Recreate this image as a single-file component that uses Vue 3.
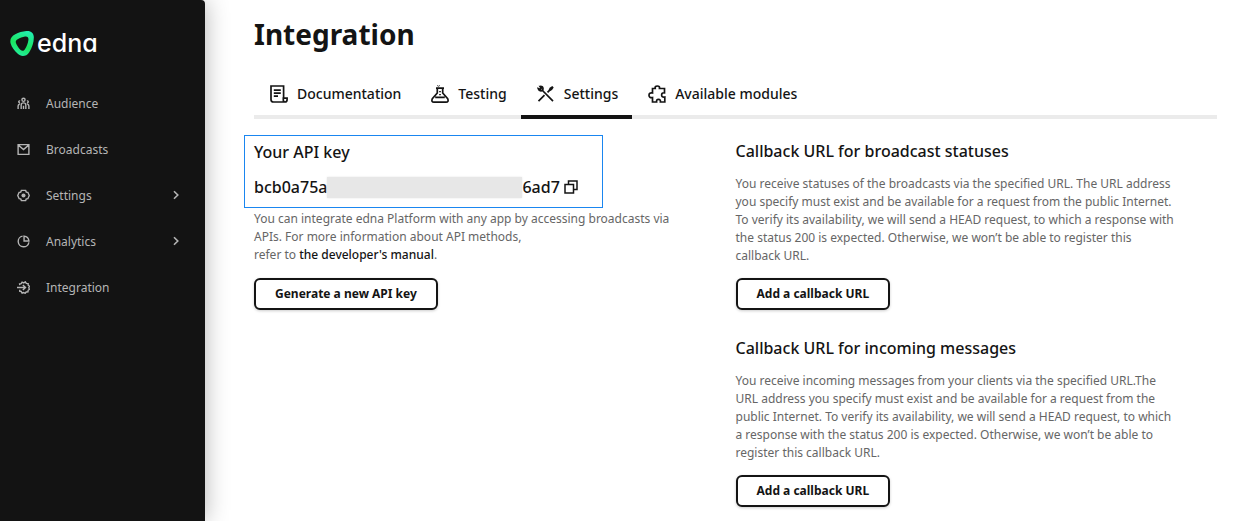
<script setup>
import { ref } from 'vue'

const menu = [
  { id: 'audience', label: 'Audience' },
  { id: 'broadcasts', label: 'Broadcasts' },
  { id: 'settings', label: 'Settings', nested: true },
  { id: 'analytics', label: 'Analytics', nested: true },
  { id: 'integration', label: 'Integration' },
]

const tabs = [
  { id: 'docs', label: 'Documentation' },
  { id: 'testing', label: 'Testing' },
  { id: 'settings', label: 'Settings' },
  { id: 'modules', label: 'Available modules' },
]
const activeTab = ref('settings')

const callbacks = [
  {
    id: 'statuses',
    title: 'Callback URL for broadcast statuses',
    text: 'You receive statuses of the broadcasts via the specified URL. The URL address you specify must exist and be available for a request from the public Internet. To verify its availability, we will send a HEAD request, to which a response with the status 200 is expected. Otherwise, we won’t be able to register this callback URL.',
  },
  {
    id: 'incoming',
    title: 'Callback URL for incoming messages',
    text: 'You receive incoming messages from your clients via the specified URL.The URL address you specify must exist and be available for a request from the public Internet. To verify its availability, we will send a HEAD request, to which a response with the status 200 is expected. Otherwise, we won’t be able to register this callback URL.',
  },
]
</script>

<template>
  <div class="layout">
    <aside class="sidebar">
      <a class="logo" href="#">
        <svg class="logo-mark" viewBox="0 0 26 28" aria-hidden="true">
          <defs>
            <linearGradient id="mark" x1="0.8" y1="0" x2="0.4" y2="1">
              <stop offset="0" stop-color="#22efb4" />
              <stop offset="0.6" stop-color="#1be560" />
              <stop offset="1" stop-color="#22eda0" />
            </linearGradient>
          </defs>
          <path
            fill="url(#mark)"
            fill-rule="evenodd"
            d="M17 1C21.500 0.500 24.800 3 24.800 7.500C24.800 13 23 18.500 20 23C17 27.800 11.500 28.300 7.800 24.500C4.500 21.300 1.800 18 0.600 13.800C-0.400 9.500 1.500 6.300 5.500 4.300C9 2.500 13 1.400 17 1ZM15.600 6.700C12.800 7.200 10.500 8.200 8 9.500C5.800 10.700 5.500 12.300 6.600 14.500C7.700 16.800 9 18.700 10.800 20.500C12.500 22.200 14.200 22 15.500 20C17.300 17.200 18.600 13.800 19.100 10.500C19.500 7.700 18.400 6.300 15.600 6.700Z"
          />
        </svg>
        <span class="logo-text">edna</span>
      </a>

      <nav class="menu" aria-label="Main">
        <a v-for="item in menu" :key="item.id" class="menu-item" href="#">
          <svg class="menu-icon" viewBox="0 0 14 14" aria-hidden="true">
            <template v-if="item.id === 'audience'">
              <circle cx="7" cy="3" r="1.700" />
              <path d="M4.500 13V8.500Q4.500 6.300 7 6.300Q9.500 6.300 9.500 8.500V13M7 9.500V13M3.300 4.300a1 1 0 1 0 0 1.800M10.700 4.300a1 1 0 1 1 0 1.800M1.200 13V9.700Q1.200 8 3 7.800M12.800 13V9.700Q12.800 8 11 7.800" />
            </template>
            <template v-else-if="item.id === 'broadcasts'">
              <path d="M1.200 1.700H12.800V12.300H1.200ZM1.500 2.300L7 7L12.500 2.300" />
            </template>
            <template v-else-if="item.id === 'settings'">
              <path d="M4.700 1.500H9.300L10 3.300L11.700 3.600L13.200 7L11.700 10.400L10 10.700L9.300 12.500H4.700L4 10.700L2.300 10.400L0.800 7L2.300 3.600L4 3.300Z" />
              <circle class="solid" cx="7" cy="7" r="2.200" />
            </template>
            <template v-else-if="item.id === 'analytics'">
              <path d="M6 1.200A5.800 5.800 0 1 0 12.800 7.900M7.600 1.200V6.400H12.800A5.800 5.800 0 0 0 7.600 1.200Z" />
            </template>
            <template v-else>
              <path d="M3 4.500L2.800 3L4.500 2.900L5.500 1.300L7.200 2L9 0.900L10 2.500L12 2.700L12 4.600L13.400 5.700L12.700 7.300L13.400 9L12 10L11.800 11.800L9.900 11.900L8.800 13.200L7.200 12.400L5.500 13L4.500 11.300L2.900 11L3 9.500" />
              <path d="M0 7H9M6.300 4.200L9.200 7L6.300 9.800" />
            </template>
          </svg>
          <span class="menu-label">{{ item.label }}</span>
          <svg v-if="item.nested" class="chevron" viewBox="0 0 8 10" aria-hidden="true">
            <path d="M2 1.200L5.800 5L2 8.800" />
          </svg>
        </a>
      </nav>
    </aside>

    <main class="content">
      <h1 class="title">Integration</h1>

      <div class="tabs" role="tablist">
        <button
          v-for="tab in tabs"
          :key="tab.id"
          type="button"
          role="tab"
          class="tab"
          :class="{ active: tab.id === activeTab }"
          :aria-selected="tab.id === activeTab"
          @click="activeTab = tab.id"
        >
          <svg class="tab-icon" viewBox="0 0 18 18" aria-hidden="true">
            <template v-if="tab.id === 'docs'">
              <path d="M13.600 12.500V1H1V14.500Q1 17 3.500 17H15Q17.100 17 17.100 14.500V13.200H13.300V15Q13.300 17 15 17M3.800 5.200H10.800M3.800 8.200H10.800M3.800 11.200H8" />
            </template>
            <template v-else-if="tab.id === 'testing'">
              <path d="M5 3.200H13M6.300 3.500V8L1.300 13.800Q0 17.100 3 17.100H15Q18 17.100 16.700 13.800L11.700 8V3.500M4.200 12.300H13.800M9 6V7.200M9 9V10.200" />
              <circle cx="7.500" cy="0.600" r="0.300" />
            </template>
            <template v-else-if="tab.id === 'settings'">
              <path d="M1.500 16.200L7.500 10.200M10.500 7.300L13 4.800M5 5L16 16.200" />
              <path class="solid" d="M11.600 5L12.600 2.800L15.300 1.100L16.700 2.500L15 5.100L12.800 6.200Z" />
              <path d="M3 1.500Q5.800 1.100 6 3.500Q6 5.600 4.200 5.800Q2 6 1.300 3.700L3.300 4.400L4.200 3.300Z" />
            </template>
            <template v-else>
              <path d="M4.500 3.500H7.200Q6.700 1 9.300 1Q12 1 11.500 3.500H16.500V7.800Q13.600 7.500 13.600 10Q13.600 12.500 16.800 12V17H12.400Q12.700 14.300 10.500 14.300Q8.200 14.300 8.600 17H4.500V12.500Q1 13 1 10.200Q1 7.500 4.500 8Z" />
            </template>
          </svg>
          {{ tab.label }}
        </button>
      </div>

      <div class="columns">
        <section class="column">
          <div class="key-box">
            <h2 class="heading">Your API key</h2>
            <div class="key-row">
              <span>bcb0a75a</span>
              <span class="mask"></span>
              <span>6ad7</span>
              <button type="button" class="copy" aria-label="Copy API key">
                <svg viewBox="0 0 14 14" aria-hidden="true">
                  <path d="M1 4.500H9.500V13H1ZM4.500 4V1H13V9.500H10" />
                </svg>
              </button>
            </div>
          </div>
          <p class="text">
            You can integrate edna Platform with any app by accessing broadcasts via
            APIs. For more information about API methods,<br />
            refer to <a class="manual" href="#">the developer's manual</a>.
          </p>
          <button type="button" class="action">Generate a new API key</button>
        </section>

        <div class="column">
          <section v-for="item in callbacks" :key="item.id" class="callback">
            <h2 class="heading">{{ item.title }}</h2>
            <p class="text">{{ item.text }}</p>
            <button type="button" class="action">Add a callback URL</button>
          </section>
        </div>
      </div>
    </main>
  </div>
</template>

<style>
body {
  margin: 0;
  background: #fff;
}
</style>

<style scoped>
.layout {
  display: flex;
  min-height: 100vh;
  font-family: "Noto Sans", sans-serif;
  color: #141414;
}

svg {
  display: block;
  flex: none;
  fill: none;
  stroke: currentColor;
}

.sidebar {
  flex: none;
  box-sizing: border-box;
  width: 205px;
  padding-top: 29px;
  background: #131313;
  border-top-right-radius: 4px;
  box-shadow: 0 0 24px rgba(0, 0, 0, 0.3);
}

.logo {
  display: flex;
  align-items: center;
  gap: 2px;
  height: 28px;
  margin-left: 10px;
  color: #fff;
  text-decoration: none;
}

.logo-mark {
  width: 25px;
  height: 27px;
  stroke: none;
}

.logo-text {
  font: 500 25px/28px Inter, sans-serif;
  font-feature-settings: "cv11";
}

.menu {
  margin-top: 23px;
}

.menu-item {
  display: flex;
  align-items: center;
  height: 46px;
  padding: 0 25px 0 17px;
  color: #b5b5b5;
  font-size: 12px;
  text-decoration: none;
}

.menu-icon {
  width: 13px;
  height: 13px;
  stroke-width: 1.5;
}

.menu-label {
  flex: 1;
  margin-left: 16px;
}

.chevron {
  width: 8px;
  height: 10px;
  stroke-width: 1.6;
}

.content {
  flex: 1;
  min-width: 0;
  padding: 14px 17px 12px 49px;
}

.title {
  margin: 0;
  font-size: 28px;
  line-height: 40px;
  font-weight: 700;
}

.tabs {
  display: flex;
  margin-top: 20px;
  box-shadow: inset 0 -4px #ebebeb;
}

.tab {
  display: flex;
  align-items: center;
  gap: 9px;
  height: 45px;
  padding: 0 14px 5px 16px;
  border: 0;
  background: none;
  color: inherit;
  font: 500 14px/20px "Noto Sans", sans-serif;
  cursor: pointer;
}

.tab.active {
  box-shadow: inset 0 -4px #131313;
}

.tab-icon {
  width: 18px;
  height: 18px;
  stroke-width: 1.7;
}

.solid {
  fill: currentColor;
  stroke: none;
}

.columns {
  display: grid;
  grid-template-columns: 1fr 1fr;
  padding-top: 16px;
}

.column {
  padding-right: 38px;
}

.key-box {
  box-sizing: border-box;
  width: 359px;
  max-width: 100%;
  height: 73px;
  margin-left: -10px;
  padding: 0 9px;
  border: 1px solid #1a86f0;
}

.heading {
  margin: 0;
  font-size: 16px;
  line-height: 32px;
  font-weight: 500;
}

.key-row {
  display: flex;
  align-items: center;
  height: 38px;
  font-size: 16px;
  font-weight: 500;
}

.mask {
  width: 195px;
  height: 21px;
  background: #e7e7e7;
  box-shadow: 0 0 2px #e7e7e7;
}

.copy {
  margin-left: 4px;
  padding: 0;
  border: 0;
  background: none;
  color: inherit;
  cursor: pointer;
}

.copy svg {
  width: 14px;
  height: 14px;
  stroke-width: 1.5;
}

.text {
  margin: 2px 0 0;
  color: #666;
  font-size: 12px;
  line-height: 18px;
}

.manual {
  color: #141414;
  font-weight: 500;
  text-decoration: none;
}

.action {
  height: 32px;
  margin-top: 14px;
  padding: 0 19px;
  border: 2px solid #141414;
  border-radius: 6px;
  background: #fff;
  box-shadow: 0 1px 3px rgba(0, 0, 0, 0.2);
  color: #141414;
  font: 700 12px/16px "Noto Sans", sans-serif;
  cursor: pointer;
}

.callback + .callback {
  margin-top: 22px;
}

.callback .text {
  margin-top: 8px;
}

.callback .action {
  margin-top: 13px;
}
</style>
